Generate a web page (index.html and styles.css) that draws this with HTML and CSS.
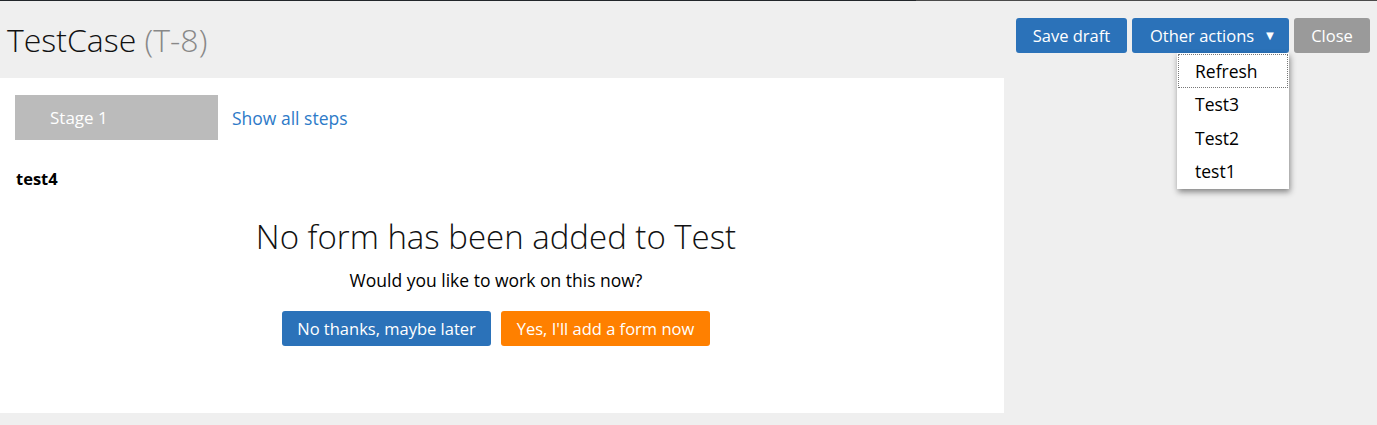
FILE: index.html
```html
<!DOCTYPE html>
<html>
<head>
<meta charset="utf-8">
<link rel="stylesheet" href="styles.css">
</head>
<body>
<div class="topline"><div class="topline-a"></div><div class="topline-b"></div></div>
<div class="page">
  <div class="main">
    <header class="header">
      <h1 class="title">TestCase <span class="key">(T-8)</span></h1>
    </header>
    <section class="panel">
      <div class="stages">
        <div class="stage">Stage 1</div>
        <a class="show-all" href="#">Show all steps</a>
      </div>
      <div class="step-name">test4</div>
      <div class="empty">
        <h2 class="empty-title">No form has been added to Test</h2>
        <p class="empty-sub">Would you like to work on this now?</p>
        <div class="empty-actions">
          <button class="btn btn-blue btn-wide">No thanks, maybe later</button>
          <button class="btn btn-orange btn-wide">Yes, I'll add a form now</button>
        </div>
      </div>
    </section>
  </div>
  <aside class="side">
    <div class="toolbar">
      <button class="btn btn-blue btn-save">Save draft</button>
      <div class="dropdown">
        <button class="btn btn-blue btn-drop">Other actions <span class="caret">&#9660;</span></button>
        <ul class="menu">
          <li class="menu-item focused">Refresh</li>
          <li class="menu-item">Test3</li>
          <li class="menu-item">Test2</li>
          <li class="menu-item">test1</li>
        </ul>
      </div>
      <button class="btn btn-gray btn-close">Close</button>
    </div>
  </aside>
</div>
</body>
</html>
```

FILE: styles.css
```css
* { box-sizing: border-box; }
html, body {
  margin: 0;
  padding: 0;
  background: #efefef;
  font-family: "Open Sans", "Noto Sans", sans-serif;
  color: #000;
}
.topline { display: flex; height: 1px; }
.topline-a { width: 916px; background: #22262a; }
.topline-b { flex: 1; background: #4a4a4a; }

.page { display: flex; align-items: flex-start; }
.main { width: 1004px; }
.header { height: 77px; padding: 17px 0 0 7px; }
.title {
  margin: 0;
  font-size: 32px;
  font-weight: 300;
  line-height: 44px;
  color: #111;
}
.key { color: #888; }

.panel {
  background: #fff;
  height: 335px;
  padding: 17px 15px 0;
}
.stages { display: flex; align-items: center; }
.stage {
  width: 203px;
  height: 45px;
  background: #bbb;
  color: #fff;
  font-size: 17px;
  line-height: 45px;
  padding-left: 35px;
}
.show-all {
  margin-left: 14px;
  color: #2d7ac8;
  text-decoration: none;
  font-size: 17.5px;
  padding-top: 1px;
}
.step-name {
  margin-top: 28px;
  font-size: 16.5px;
  font-weight: 700;
  line-height: 22px;
  padding-left: 1px;
}
.empty { text-align: center; margin: 25px 12px 0 0; }
.empty-title {
  margin: 0;
  font-size: 33px;
  font-weight: 300;
  line-height: 44px;
  color: #111;
}
.empty-sub {
  margin: 9px 0 0;
  font-size: 17.5px;
  line-height: 24px;
}
.empty-actions {
  display: flex;
  justify-content: center;
  gap: 10px;
  margin-top: 19px;
}

.btn {
  border: 0;
  border-radius: 3px;
  font-family: inherit;
  font-size: 16.5px;
  color: #fff;
  height: 35px;
  padding: 0 17px;
  cursor: pointer;
}
.btn-wide { width: 209px; padding: 0; font-size: 16.5px; }
.btn-blue { background: #2b72b9; }
.btn-orange { background: #ff8000; }
.btn-gray { background: #9a9a9a; }
.btn-save { width: 111px; padding: 0; }
.btn-close { width: 76px; padding: 0; }

.side { flex: 1; }
.toolbar {
  display: flex;
  gap: 5px;
  padding: 17px 0 0 12px;
}
.dropdown { position: relative; }
.btn-drop { width: 157px; padding: 0 0 0 4px; text-align: left; padding-left: 18px; }
.caret { font-size: 13px; margin-left: 5px; position: relative; top: -2px; }
.menu {
  position: absolute;
  top: 35px;
  right: 0;
  width: 112px;
  margin: 0;
  padding: 0;
  list-style: none;
  background: #fff;
  box-shadow: 1px 3px 6px rgba(0,0,0,0.45);
}
.menu-item {
  font-size: 17.5px;
  height: 33.5px;
  line-height: 33.5px;
  padding-left: 16px;
  margin: 0 2px;
}
.menu-item.focused {
  border: 1px dotted #777;
  margin: 1px 1px 0;
  height: 34px;
  line-height: 32px;
  padding-left: 16px;
}
```
